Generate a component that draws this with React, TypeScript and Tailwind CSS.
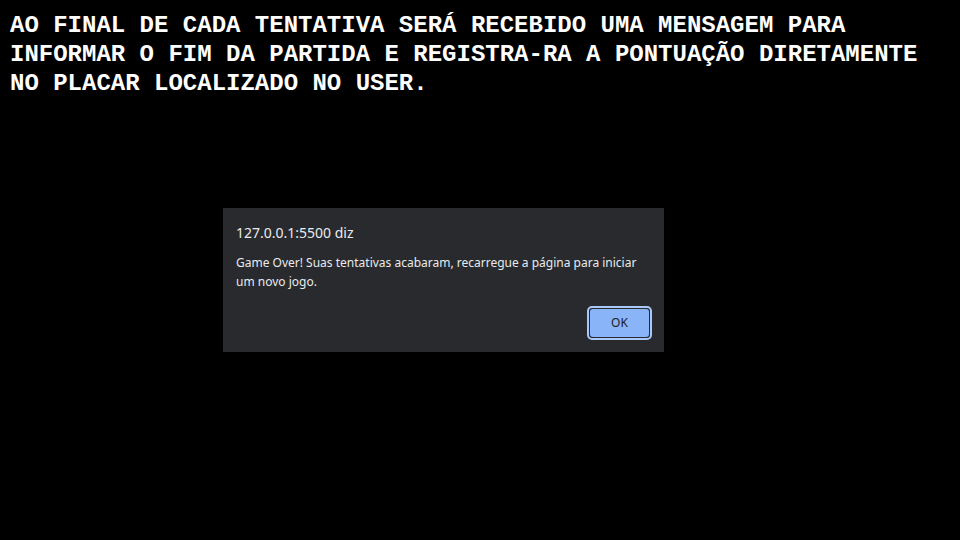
export default function App() {
  return (
    <div className="flex h-[540px] w-[960px] flex-col bg-black">
      <p className="px-[10px] pt-[11px] font-['Liberation_Mono',monospace] text-[24px] font-bold leading-[29px] text-white">
        AO FINAL DE CADA TENTATIVA SERÁ RECEBIDO UMA MENSAGEM PARA INFORMAR O FIM DA PARTIDA E REGISTRA-RA A PONTUAÇÃO DIRETAMENTE NO PLACAR LOCALIZADO NO USER.
      </p>

      {/* alert dialog */}
      <div className="ml-[223px] mt-[110px] flex h-[144px] w-[441px] flex-col bg-[#292a2d] pl-[13px] pr-[12px] pt-[15px] font-['Noto_Sans',sans-serif] text-[#e8eaed]">
        <div className="text-[14px] leading-[20px]">127.0.0.1:5500 diz</div>
        <div className="mt-[10px] text-[12px] leading-[19px]">
          Game Over! Suas tentativas acabaram, recarregue a página para iniciar um novo jogo.
        </div>
        <div className="mt-[15px] flex justify-end">
          <div className="rounded-[5px] border-2 border-[#a8c7fa] p-[1px]">
            <button className="h-[28px] w-[59px] rounded-[3px] bg-[#8ab4f8] text-[12px] text-[#202124]">OK</button>
          </div>
        </div>
      </div>
    </div>
  );
}
